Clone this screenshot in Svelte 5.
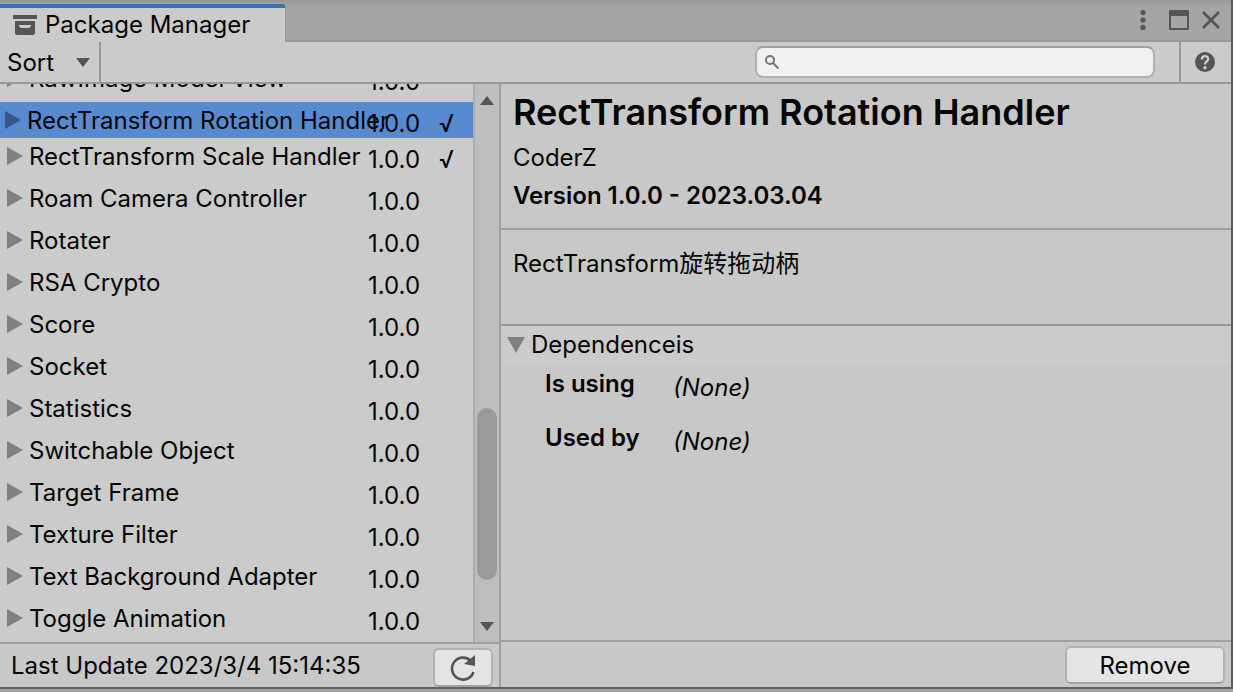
<script>
	let packages = [
		{ name: "RawImage Model View", version: "1.0.0", installed: false },
		{ name: "RectTransform Rotation Handler", version: "1.0.0", installed: true },
		{ name: "RectTransform Scale Handler", version: "1.0.0", installed: true },
		{ name: "Roam Camera Controller", version: "1.0.0", installed: false },
		{ name: "Rotater", version: "1.0.0", installed: false },
		{ name: "RSA Crypto", version: "1.0.0", installed: false },
		{ name: "Score", version: "1.0.0", installed: false },
		{ name: "Socket", version: "1.0.0", installed: false },
		{ name: "Statistics", version: "1.0.0", installed: false },
		{ name: "Switchable Object", version: "1.0.0", installed: false },
		{ name: "Target Frame", version: "1.0.0", installed: false },
		{ name: "Texture Filter", version: "1.0.0", installed: false },
		{ name: "Text Background Adapter", version: "1.0.0", installed: false },
		{ name: "Toggle Animation", version: "1.0.0", installed: false }
	];
	let selected = 1;
	let search = "";
	let open = true;
</script>

<div class="window">
	<header class="tabs">
		<div class="tab">
			<svg width="24" height="20" viewBox="0 0 24 20" aria-hidden="true">
				<path fill="#555" d="M0 0h24v4H0z" />
				<path fill="#555" fill-rule="evenodd" d="M2 6h20v12q0 2-2 2H4q-2 0-2-2zM6 10q0 3 3 3h6q3 0 3-3z" />
			</svg>
			<h1>Package Manager</h1>
		</div>
		<div class="controls">
			<button aria-label="Menu">
				<svg width="6" height="20" viewBox="0 0 6 20"><g fill="#555"><circle cx="3" cy="2.6" r="2.6" /><circle cx="3" cy="10" r="2.6" /><circle cx="3" cy="17.4" r="2.6" /></g></svg>
			</button>
			<button aria-label="Maximize">
				<svg width="20" height="20" viewBox="0 0 20 20"><path fill="#555" fill-rule="evenodd" d="M1 0h18l1 1v18l-1 1H1l-1-1V1zM2 6v12h16V6z" /></svg>
			</button>
			<button aria-label="Close">
				<svg width="18" height="18" viewBox="0 0 18 18"><path fill="none" stroke="#555" stroke-width="2.8" d="M1 1l16 16M17 1L1 17" /></svg>
			</button>
		</div>
	</header>

	<div class="toolbar">
		<div class="sort">
			<select aria-label="Sort">
				<option>Sort</option>
			</select>
			<svg width="14" height="9" viewBox="0 0 14 9" aria-hidden="true"><path fill="#55564f" d="M0 0h14L7 9z" /></svg>
		</div>
		<label class="search">
			<svg width="14" height="14" viewBox="0 0 14 14" aria-hidden="true"><circle cx="5" cy="5" r="4" fill="none" stroke="#777" stroke-width="2" /><path stroke="#777" stroke-width="2" d="M8 8l5.500 5.500" /></svg>
			<input type="text" aria-label="Search" bind:value={search} />
		</label>
		<button class="help" aria-label="Help">
			<svg width="20" height="20" viewBox="0 0 20 20"><circle cx="10" cy="10" r="10" fill="#555" /><path fill="none" stroke="#ccc" stroke-width="2.400" d="M6.800 7.600C6.800 3 13.400 3.200 13.200 7.200C13 9.600 10 9.400 10 12.600" /><circle cx="10" cy="15.700" r="1.700" fill="#ccc" /></svg>
		</button>
	</div>

	<main>
		<section class="left">
			<div class="browser">
				<ul class="list">
					{#each packages as pkg, i}
						<li>
							<button class="row" class:selected={i === selected} on:click={() => (selected = i)}>
								<svg width="16" height="18" viewBox="0 0 16 18" aria-hidden="true"><path d="M0 0l16 9L0 18z" /></svg>
								<span class="name">{pkg.name}</span>
								<span class="version">{pkg.version}</span>
								<span class="check">{pkg.installed ? "√" : ""}</span>
							</button>
						</li>
					{/each}
				</ul>
				<div class="scrollbar">
					<button aria-label="Scroll up">
						<svg width="14" height="9" viewBox="0 0 14 9"><path fill="#55564f" d="M0 9h14L7 0z" /></svg>
					</button>
					<div class="track">
						<div class="thumb"></div>
					</div>
					<button aria-label="Scroll down">
						<svg width="14" height="9" viewBox="0 0 14 9"><path fill="#55564f" d="M0 0h14L7 9z" /></svg>
					</button>
				</div>
			</div>
			<footer class="status">
				<span>Last Update 2023/3/4 15:14:35</span>
				<button class="btn refresh" aria-label="Refresh">
					<svg width="26" height="26" viewBox="0 0 26 26"><path fill="none" stroke="#555" stroke-width="2.600" d="M20.500 5.500A11 11 0 1 0 23.500 17" /><path fill="#555" d="M25 0v11l-11-2z" /></svg>
				</button>
			</footer>
		</section>

		<section class="detail">
			<div class="summary">
				<h2>{packages[selected].name}</h2>
				<p>CoderZ</p>
				<p class="release">Version {packages[selected].version} - 2023.03.04</p>
			</div>
			<p class="description">RectTransform旋转拖动柄</p>
			<button class="foldout" aria-expanded={open} on:click={() => (open = !open)}>
				<svg width="18" height="16" viewBox="0 0 18 16" aria-hidden="true"><path fill="#808080" d="M0 0h18L9 16z" /></svg>
				<span>Dependenceis</span>
			</button>
			{#if open}
				<dl>
					<dt>Is using</dt>
					<dd>(None)</dd>
					<dt>Used by</dt>
					<dd>(None)</dd>
				</dl>
			{/if}
			<footer class="actions">
				<button class="btn remove">Remove</button>
			</footer>
		</section>
	</main>
</div>

<style>
	:global(body) {
		background: #a2a2a2;
	}

	.window {
		box-sizing: border-box;
		display: flex;
		flex-direction: column;
		height: calc(100vh - 3px);
		border-right: 2px solid #5c5c5c;
		border-bottom: 2px solid #606060;
		background: #c8c8c8;
		color: #060606;
		font-family: Inter, "Noto Sans CJK SC", sans-serif;
		font-size: 24px;
		line-height: 32px;
	}

	h1, h2, p, ul, dl, dd {
		margin: 0;
		padding: 0;
		font-size: inherit;
		font-weight: 400;
	}

	button, select, input {
		margin: 0;
		padding: 0;
		border: 0;
		background: none;
		color: inherit;
		font: inherit;
	}

	svg {
		display: block;
		flex: none;
	}

	.tabs {
		display: flex;
		justify-content: space-between;
		align-items: flex-end;
		height: 42px;
		background: linear-gradient(#999 0, #a5a5a5 6px, #a5a5a5 40px, #999 40px);
	}

	.tab {
		box-sizing: border-box;
		display: flex;
		align-items: center;
		gap: 8px;
		width: 286px;
		height: 38px;
		padding-left: 13px;
		border-top: 4px solid #3a72b0;
		border-right: 1px solid #999;
		border-radius: 0 4px 0 0;
		background: #cbcbcb;
	}

	.controls {
		display: flex;
		align-items: center;
		height: 40px;
		padding: 0 11px 2px 0;
	}

	.controls button + button {
		margin-left: 13px;
	}

	.controls button:nth-child(2) {
		margin-left: 23px;
	}

	.toolbar {
		display: flex;
		justify-content: space-between;
		height: 40px;
		border-bottom: 2px solid #999;
		background: #cbcbcb;
	}

	.sort {
		display: grid;
		align-items: center;
		width: 99px;
		border-right: 2px solid #999;
	}

	.sort select, .sort svg {
		grid-area: 1 / 1;
	}

	.sort select {
		appearance: none;
		height: 40px;
		padding: 2px 0 0 7px;
	}

	.sort svg {
		justify-self: end;
		margin-right: 9px;
		pointer-events: none;
	}

	.search {
		box-sizing: border-box;
		display: flex;
		align-items: center;
		gap: 8px;
		width: 400px;
		height: 32px;
		margin: 4px 24px 0 auto;
		padding: 0 8px;
		border: 2px solid #b0b0b0;
		border-top-color: #a0a0a0;
		border-radius: 8px;
		background: #f0f0f0;
	}

	.search input {
		flex: 1;
		min-width: 0;
		outline: none;
	}

	.help {
		width: 52px;
		padding-left: 14px;
		border-left: 2px solid #999;
	}

	main {
		flex: 1;
		display: flex;
		min-height: 0;
	}

	.left {
		display: flex;
		flex-direction: column;
		flex: none;
		width: 499px;
		border-right: 2px solid #a0a0a0;
	}

	.browser {
		flex: 1;
		display: flex;
		min-height: 0;
		background: #cbcbcb;
	}

	.list {
		flex: 1;
		display: flex;
		flex-direction: column;
		justify-content: flex-end;
		overflow: hidden;
		list-style: none;
	}

	.row {
		display: grid;
		grid-template-columns: 22px 339px 71px 1fr;
		width: 100%;
		height: 42px;
		padding-left: 7px;
		text-align: left;
		white-space: nowrap;
	}

	.row svg {
		margin-top: 9px;
		fill: #808080;
	}

	.name {
		padding-top: 3px;
	}

	.version {
		padding-top: 6px;
	}

	.check {
		padding-top: 6px;
	}

	.row.selected {
		grid-template-columns: 22px 341px 71px 1fr;
		height: 36px;
		padding-left: 5px;
		background: #588ad0;
	}

	.row.selected svg {
		fill: #37578a;
	}

	.list li {
		flex: none;
		display: flex;
	}

	.scrollbar {
		display: flex;
		flex-direction: column;
		width: 24px;
		border-left: 2px solid #acacac;
		background: #bebebe;
	}

	.scrollbar button {
		display: grid;
		place-items: center;
		height: 32px;
	}

	.track {
		flex: 1;
		display: flex;
		flex-direction: column;
		align-items: center;
	}

	.track::before {
		content: "";
		flex: 292;
	}

	.track::after {
		content: "";
		flex: 30;
	}

	.thumb {
		flex: 172;
		width: 20px;
		border-radius: 10px;
		background: #9a9a9a;
	}

	.status {
		display: flex;
		justify-content: space-between;
		height: 43px;
		padding: 0 6px 0 11px;
		border-top: 2px solid #a0a0a0;
	}

	.status span {
		padding-top: 6px;
	}

	.btn {
		box-sizing: border-box;
		border: 2px solid #b2b2b2;
		border-bottom-color: #a2a2a2;
		border-radius: 6px;
		background: #e4e4e4;
	}

	.refresh {
		display: grid;
		place-items: center;
		width: 60px;
		height: 39px;
		margin-top: 4px;
	}

	.detail {
		flex: 1;
		display: flex;
		flex-direction: column;
		min-width: 0;
	}

	.summary {
		height: 144px;
		padding-left: 12px;
		border-bottom: 2px solid #a0a0a0;
	}

	h2 {
		padding: 8px 0 10px;
		font-size: 36px;
		font-weight: 600;
		line-height: 40px;
	}

	.release {
		padding-top: 6px;
		font-weight: 600;
	}

	.description {
		height: 76px;
		padding: 18px 12px 0;
		border-bottom: 2px solid #999;
	}

	.foldout {
		display: flex;
		align-items: center;
		gap: 6px;
		height: 40px;
		padding: 0 0 2px 6px;
		background: #cbcbcb;
	}

	dl {
		display: grid;
		grid-template-columns: 128px 1fr;
		grid-auto-rows: 54px;
		padding-left: 44px;
	}

	dt {
		padding-top: 2px;
		font-weight: 600;
	}

	dd {
		padding-top: 6px;
		font-style: italic;
	}

	.actions {
		display: flex;
		justify-content: flex-end;
		height: 41px;
		margin-top: auto;
		padding: 4px 6px 0 0;
		border-top: 2px solid #a0a0a0;
	}

	.remove {
		width: 160px;
		height: 38px;
		padding-top: 2px;
	}
</style>
